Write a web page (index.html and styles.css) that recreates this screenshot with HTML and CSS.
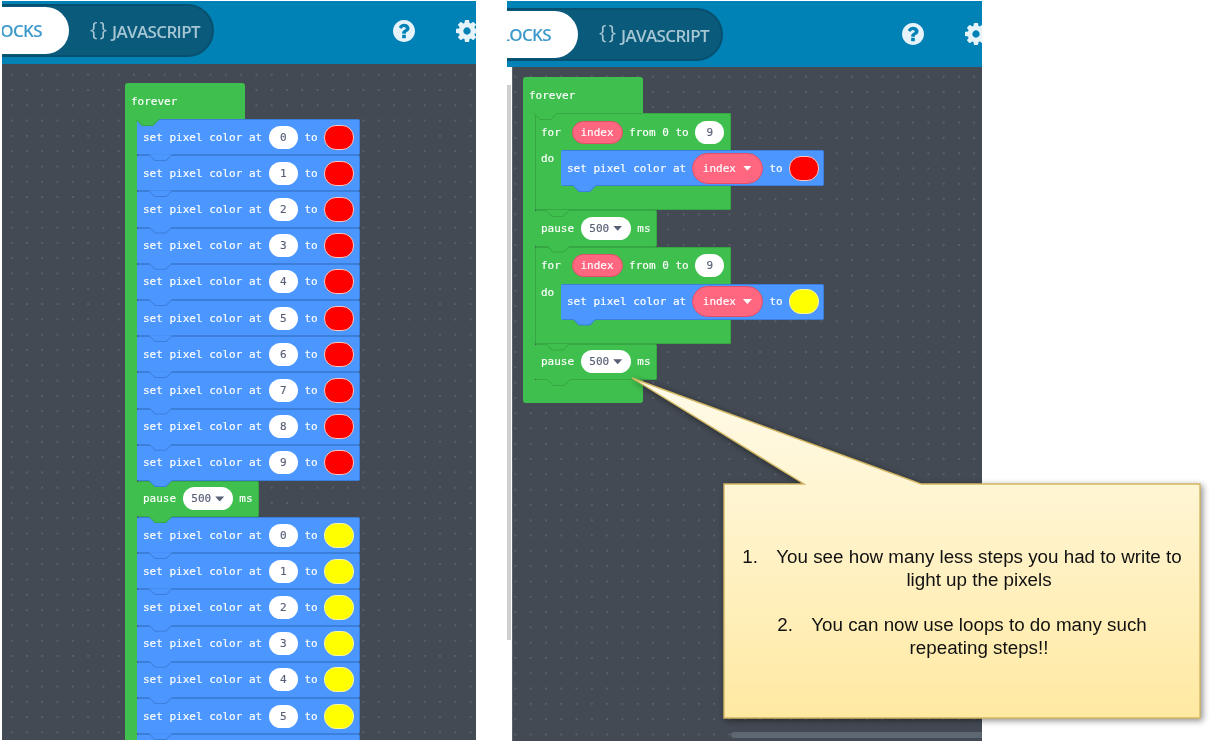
FILE: index.html
```html
<!DOCTYPE html>
<html lang="en">
<head>
<meta charset="utf-8">
<title>Loops versus repeated blocks</title>
<link rel="stylesheet" href="styles.css">
</head>
<body>
<svg class="defs" width="0" height="0" aria-hidden="true">
  <symbol id="i-help" viewBox="128 128 1536 1536"><path d="M1024 1376v-192q0-14-9-23t-23-9h-192q-14 0-23 9t-9 23v192q0 14 9 23t23 9h192q14 0 23-9t9-23zm256-672q0-88-55.5-163t-138.5-116-170-41q-243 0-371 213-15 24 8 42l132 100q7 6 19 6 16 0 25-12 53-68 86-92 34-24 86-24 48 0 85.5 26t37.5 59q0 38-20 61t-68 45q-63 28-115.5 86.5t-52.5 125.5v36q0 14 9 23t23 9h192q14 0 23-9t9-23q0-19 21.5-49.5t54.5-49.5q32-18 49-28.5t46-35 44.5-48 28-60.5 12.5-81zm384 192q0 209-103 385.5t-279.5 279.5-385.5 103-385.5-103-279.5-279.5-103-385.5 103-385.5 279.5-279.5 385.5-103 385.5 103 279.5 279.5 103 385.5z"/></symbol>
  <symbol id="i-gear" viewBox="128 128 1536 1536"><path d="M1152 896q0-106-75-181t-181-75-181 75-75 181 75 181 181 75 181-75 75-181zm512-109v222q0 12-8 23t-20 13l-185 28q-19 54-39 91 35 50 107 138 10 12 10 25t-9 23q-27 37-99 108t-94 71q-12 0-26-9l-138-108q-44 23-91 38-16 136-29 186-7 28-36 28h-222q-14 0-24.5-8.5t-11.5-21.5l-28-184q-49-16-90-37l-141 107q-10 9-25 9-14 0-25-11-126-114-165-168-7-10-7-23 0-12 8-23 15-21 51-66.5t54-70.5q-27-50-41-99l-183-27q-13-2-21-12.5t-8-23.5v-222q0-12 8-23t19-13l186-28q14-46 39-92-40-57-107-138-10-12-10-24 0-10 9-23 26-36 98.5-107.5t94.5-71.5q13 0 26 10l138 107q44-23 91-38 16-136 29-186 7-28 36-28h222q14 0 24.5 8.5t11.5 21.5l28 184q49 16 90 37l142-107q9-9 24-9 13 0 25 10 129 119 165 170 7 8 7 22 0 12-8 23-15 21-51 66.5t-54 70.5q26 50 41 98l183 28q13 2 21 12.5t8 23.5z"/></symbol>
</svg>

<main class="page">
  <section class="panel panel-left">
    <header class="header">
      <div class="toggle">
        <div class="tab-on">BLOCKS</div>
        <div class="tab-off"><span class="braces">{}</span>JAVASCRIPT</div>
      </div>
      <svg class="icon icon-help"><use href="#i-help"/></svg>
      <svg class="icon icon-gear"><use href="#i-gear"/></svg>
    </header>
    <div class="workspace">
      <div class="canvas">
        <div class="forever">
          <div class="forever-head green tab">forever</div>
          <div class="forever-body">
            <div class="block blue tab">set pixel color at <span class="num-pill">0</span> to <span class="colour red"></span></div>
            <div class="block blue tab">set pixel color at <span class="num-pill">1</span> to <span class="colour red"></span></div>
            <div class="block blue tab">set pixel color at <span class="num-pill">2</span> to <span class="colour red"></span></div>
            <div class="block blue tab">set pixel color at <span class="num-pill">3</span> to <span class="colour red"></span></div>
            <div class="block blue tab">set pixel color at <span class="num-pill">4</span> to <span class="colour red"></span></div>
            <div class="block blue tab">set pixel color at <span class="num-pill">5</span> to <span class="colour red"></span></div>
            <div class="block blue tab">set pixel color at <span class="num-pill">6</span> to <span class="colour red"></span></div>
            <div class="block blue tab">set pixel color at <span class="num-pill">7</span> to <span class="colour red"></span></div>
            <div class="block blue tab">set pixel color at <span class="num-pill">8</span> to <span class="colour red"></span></div>
            <div class="block blue tab">set pixel color at <span class="num-pill">9</span> to <span class="colour red"></span></div>
            <div class="block green tab pause">pause <span class="num-pill wide">500<i class="caret"></i></span> ms</div>
            <div class="block blue tab">set pixel color at <span class="num-pill">0</span> to <span class="colour yellow"></span></div>
            <div class="block blue tab">set pixel color at <span class="num-pill">1</span> to <span class="colour yellow"></span></div>
            <div class="block blue tab">set pixel color at <span class="num-pill">2</span> to <span class="colour yellow"></span></div>
            <div class="block blue tab">set pixel color at <span class="num-pill">3</span> to <span class="colour yellow"></span></div>
            <div class="block blue tab">set pixel color at <span class="num-pill">4</span> to <span class="colour yellow"></span></div>
            <div class="block blue tab">set pixel color at <span class="num-pill">5</span> to <span class="colour yellow"></span></div>
            <div class="block blue tab">set pixel color at <span class="num-pill">6</span> to <span class="colour yellow"></span></div>
          </div>
        </div>
      </div>
    </div>
  </section>

  <section class="panel panel-right">
    <header class="header">
      <div class="toggle">
        <div class="tab-on">BLOCKS</div>
        <div class="tab-off"><span class="braces">{}</span>JAVASCRIPT</div>
      </div>
      <svg class="icon icon-help"><use href="#i-help"/></svg>
      <svg class="icon icon-gear"><use href="#i-gear"/></svg>
    </header>
    <div class="workspace">
      <div class="strip"><div class="strip-thumb"></div></div>
      <div class="canvas">
        <div class="forever">
          <div class="forever-head green tab">forever</div>
          <div class="forever-body">
            <div class="loop green tab">
              <div class="loop-head">for <span class="var-pill">index</span> from 0 to <span class="num-pill">9</span></div>
              <div class="loop-mouth">
                <div class="loop-do">do</div>
                <div class="block blue tab inner">set pixel color at <span class="var-pill large">index<i class="caret light"></i></span> to <span class="colour red"></span></div>
              </div>
              <div class="loop-foot"></div>
            </div>
            <div class="block green tab pause">pause <span class="num-pill wide">500<i class="caret"></i></span> ms</div>
            <div class="loop green tab">
              <div class="loop-head">for <span class="var-pill">index</span> from 0 to <span class="num-pill">9</span></div>
              <div class="loop-mouth">
                <div class="loop-do">do</div>
                <div class="block blue tab inner">set pixel color at <span class="var-pill large">index<i class="caret light"></i></span> to <span class="colour yellow"></span></div>
              </div>
              <div class="loop-foot"></div>
            </div>
            <div class="block green tab pause">pause <span class="num-pill wide">500<i class="caret"></i></span> ms</div>
          </div>
          <div class="forever-foot green"></div>
        </div>
        <div class="hscroll"></div>
      </div>
    </div>
  </section>
</main>

<aside class="callout">
  <svg class="callout-shape" width="590" height="360" aria-hidden="true">
    <defs>
      <linearGradient id="note" gradientUnits="userSpaceOnUse" x1="0" y1="6" x2="0" y2="346">
        <stop offset="0" stop-color="#fffbea"/>
        <stop offset="1" stop-color="#ffe9a2"/>
      </linearGradient>
    </defs>
    <path d="M8 6 L180 112 H100 V346 H576 V112 H297 Z" fill="url(#note)" stroke="#d3b763" stroke-width="1.4"/>
  </svg>
  <div class="note">
    <p class="note-item"><span class="note-num">1.</span>You see how many less steps you had to write to light up the pixels</p>
    <p class="note-item"><span class="note-num">2.</span>You can now use loops to do many such repeating steps!!</p>
  </div>
</aside>
</body>
</html>
```

FILE: styles.css
```css
* { box-sizing: border-box; }

html, body { margin: 0; height: 100%; background: #fff; overflow: hidden; }

.defs { position: absolute; }

.page {
  display: flex;
  gap: 31px;
  padding: 1px 0 0 2px;
  height: 743px;
}

.panel {
  display: flex;
  flex-direction: column;
  overflow: hidden;
  filter: blur(0.35px);
}
.panel-left { width: 474px; height: 739px; }
.panel-right { width: 475px; height: 740px; }

/* header */
.header {
  flex: none;
  display: flex;
  align-items: center;
  background: #0082b6;
}
.panel-left .header { height: 63px; padding-bottom: 4px; }
.panel-right .header { height: 66px; padding-bottom: 1px; padding-top: 1px; }

.toggle {
  flex: none;
  display: flex;
  align-items: center;
  width: 252px;
  height: 53px;
  margin-left: -40px;
  background: #0a5a7b;
  border: 2px solid #08506f;
  border-radius: 0 27px 27px 0;
  font-family: "Open Sans", sans-serif;
  font-size: 17px;
  font-weight: 600;
  letter-spacing: -0.65px;
}
.panel-right .toggle { margin-left: -36px; }

.tab-on {
  width: 106px;
  height: 47px;
  padding-right: 27px;
  margin-left: -1px;
  background: #fff;
  border-radius: 0 24px 24px 0;
  color: #3d9acb;
  line-height: 47px;
  text-align: right;
}

.tab-off {
  display: flex;
  align-items: center;
  margin: 2px 0 0 21px;
  color: #a6c6d4;
  white-space: nowrap;
}
.braces {
  margin: -7px 3px 0 0;
  font-size: 20px;
  font-weight: 400;
  letter-spacing: 2px;
}

.icon { flex: none; width: 22px; height: 22px; fill: #e6f3f9; }
.icon-help { margin-left: 179px; }
.icon-gear { margin-left: 41px; }

/* workspace */
.workspace { flex: 1; display: flex; min-height: 0; }

.strip { flex: none; width: 5px; padding-top: 18px; background: #fff; }
.strip-thumb { width: 4px; height: 555px; background: #cfcfcf; }

.canvas {
  position: relative;
  flex: 1;
  overflow: hidden;
  background-color: #434a53;
  background-image: radial-gradient(circle at center, #59606a 0, #59606a 0.7px, transparent 1.1px);
  background-size: 15.3px 15.3px;
  font-family: "DejaVu Sans Mono", monospace;
  font-size: 11px;
  color: #fff;
  -webkit-text-stroke: 0.15px currentColor;
}
.panel-left .canvas { padding: 19px 0 0 123px; background-position: 2px 3px; }
.panel-right .canvas { padding: 10px 0 0 10px; border-left: 1px solid #5d636b; background-position: 10px 2px; }

.hscroll {
  position: absolute;
  left: 218px;
  right: 0;
  bottom: 3px;
  height: 6px;
  background: #5d6873;
  border-radius: 3px 0 0 3px;
}

/* blocks */
.green { background: #3fbf4d; --edge: #36a843; --fill: #3fbf4d; }
.blue { background: #4c97ff; --edge: #3c7fdb; --fill: #4c97ff; }

.tab { position: relative; }
.tab::before,
.tab::after {
  content: "";
  position: absolute;
  z-index: 1;
  clip-path: polygon(0 0, 100% 0, 72% 100%, 28% 100%);
}
.tab::before { left: 10px; bottom: -7px; width: 25px; height: 7px; background: var(--edge); }
.tab::after { left: 11px; bottom: -6px; width: 23px; height: 6px; background: var(--fill); }

.forever { width: 120px; }

.forever-head {
  display: flex;
  align-items: center;
  width: 120px;
  height: 36px;
  padding-left: 6px;
  border-radius: 3px 3px 0 0;
}

.forever-body { border-left: 12px solid #3fbf4d; }

.forever-foot { width: 120px; height: 23px; border-radius: 0 0 3px 3px; }

.block {
  display: flex;
  align-items: center;
  width: 223px;
  height: 36.2px;
  padding-left: 5px;
  border: 1px solid var(--edge);
  border-left-color: var(--fill);
  border-radius: 2px;
  white-space: pre;
}
.pause { width: 122px; }
.panel-right .pause { height: 36.5px; }
.inner { flex: none; width: 263px; height: 36px; }

.num-pill {
  display: flex;
  align-items: center;
  justify-content: center;
  flex: none;
  width: 29px;
  height: 23px;
  border-radius: 12px;
  background: #fff;
  color: #575e75;
}
.num-pill.wide { width: 50px; }

.colour {
  flex: none;
  width: 30px;
  height: 25px;
  border-radius: 12px;
  border: 1px solid #f7c9c0;
}
.red { background: #ff0000; }
.yellow { background: #ffff00; border-color: #f8f8a0; }

.var-pill {
  display: flex;
  align-items: center;
  justify-content: center;
  flex: none;
  width: 51px;
  height: 23px;
  margin-left: 4px;
  border: 1px solid #e04f6a;
  border-radius: 12px;
  background: #ff6680;
}
.var-pill.large { width: 71px; height: 31px; margin-left: -1px; border-radius: 16px; }

.caret {
  width: 9px;
  height: 5px;
  margin-left: 4px;
  background: #575e75;
  clip-path: polygon(0 0, 100% 0, 50% 100%);
}
.caret.light { background: #fff; margin-left: 7px; }

.loop { width: 196px; border-radius: 2px; box-shadow: inset 0 0 0 1px var(--edge); }

.loop-head {
  display: flex;
  align-items: center;
  height: 37px;
  padding: 1px 0 0 6px;
  white-space: pre;
}

.loop-mouth { display: flex; height: 36px; }
.loop-do { flex: none; width: 26px; padding: 2px 0 0 6px; }

.loop-foot { height: 24px; }

/* callout */
.callout {
  position: absolute;
  left: 624px;
  top: 372px;
  width: 590px;
  height: 360px;
  padding: 112px 0 0 100px;
  filter: blur(0.25px);
}
.callout-shape {
  position: absolute;
  inset: 0;
  filter: drop-shadow(2px 2px 3px rgba(0, 0, 0, 0.45));
}

.note {
  position: relative;
  display: flex;
  flex-direction: column;
  justify-content: center;
  gap: 21px;
  width: 476px;
  height: 234px;
  padding: 2px 15px 0 49px;
  font-family: "Liberation Sans", Arial, sans-serif;
  font-size: 18.8px;
  line-height: 23.5px;
  color: #111;
}
.note-item { margin: 0; text-align: center; }
.note-num {
  display: inline-block;
  width: 34px;
  margin-left: -34px;
  text-align: left;
}
```
